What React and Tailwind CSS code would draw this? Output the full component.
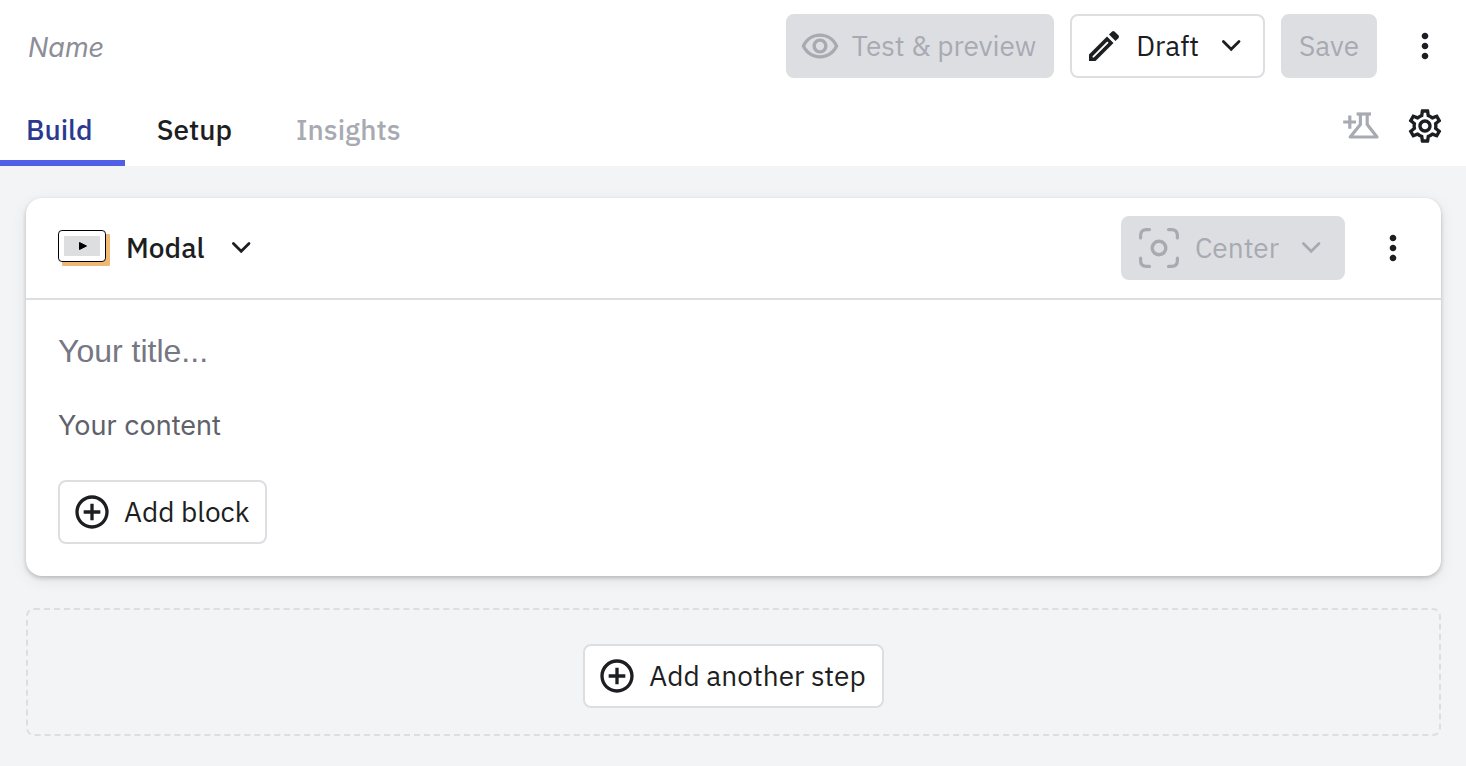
import React from "react";
import {
  MdOutlineRemoveRedEye,
  MdAddCircleOutline,
  MdMoreVert,
  MdOutlineSettings,
} from "react-icons/md";

const FONT = "font-['IBM_Plex_Sans',Roboto,sans-serif]";

function ChevronIcon() {
  return (
    <svg width="20" height="14" viewBox="0 0 20 14" fill="none" stroke="currentColor" strokeWidth="2.8" strokeLinecap="round" strokeLinejoin="miter" aria-hidden="true">
      <path d="M2.4 2.6L10.2 10.2L18 2.6" />
    </svg>
  );
}

function PencilIcon() {
  return (
    <svg width="40" height="40" viewBox="0 0 40 40" fill="currentColor" aria-hidden="true">
      <path fillRule="evenodd" d="M5 28.5L23 10.5L29.5 17L11.5 35H5ZM8.6 30.2V31.4H9.8L24.6 16.8L23.2 15.4Z" />
      <path d="M25 8.5L28.1 5.4Q29.3 4.6 30.5 5.4L34.6 9.5Q35.4 10.7 34.6 11.9L31.5 15Z" />
    </svg>
  );
}

function FlaskPlusIcon() {
  return (
    <svg width="36" height="28" viewBox="0 0 36 28" fill="none" stroke="currentColor" strokeWidth="3.2" aria-hidden="true">
      <path d="M0.2 10H13M6.8 3.6V16.8" />
      <path d="M13.6 2H28" />
      <path d="M17.4 2V12.6L7.2 25H34L24.2 12.6V2" strokeLinejoin="round" />
    </svg>
  );
}

function CenterIcon() {
  return (
    <svg width="40" height="40" viewBox="0 0 40 40" fill="none" stroke="currentColor" strokeWidth="3.2" strokeLinecap="round" aria-hidden="true">
      <path d="M1.6 10V7.5Q1.6 1.6 7.5 1.6H10.5M29.5 1.6H32.5Q38.4 1.6 38.4 7.5V10M38.4 30V32.5Q38.4 38.4 32.5 38.4H29.5M10.5 38.4H7.5Q1.6 38.4 1.6 32.5V30" />
      <circle cx="20" cy="20" r="6.8" strokeWidth="3.4" />
    </svg>
  );
}

function ModalIcon() {
  return (
    <svg width="52" height="36" viewBox="0 0 52 36" aria-hidden="true">
      <rect x="4" y="4" width="48" height="32" rx="1" fill="#f0b775" />
      <rect x="0.5" y="0.5" width="47" height="31" rx="3.4" fill="#fff" stroke="#000" strokeWidth="1" />
      <rect x="6" y="6" width="36" height="20" rx="1" fill="#dddee0" />
      <path d="M21.5 12.5L28.5 16L21.5 19.5Z" fill="#000" stroke="#000" strokeLinejoin="round" />
    </svg>
  );
}

function Button({ children, className, disabled }) {
  return (
    <button
      type="button"
      disabled={disabled}
      className={`flex h-16 shrink-0 items-center whitespace-nowrap rounded-lg border-2 border-[#dddee2] ${
        disabled ? "bg-[#dddee2] text-[#a8aab2]" : "bg-white text-[#1d1e22]"
      } ${className}`}
    >
      {children}
    </button>
  );
}

function MoreButton({ label }) {
  return (
    <button type="button" aria-label={label} className="flex h-16 w-16 items-center justify-center text-[#1d1e22]">
      <MdMoreVert size={40} />
    </button>
  );
}

export default function App() {
  return (
    <div className={`min-h-screen bg-[#f3f4f6] text-[28px] leading-9 text-[#1d1e22] ${FONT}`}>
      <header className="bg-white">
        <div className="flex items-center gap-4 pl-7 pr-[9px] pt-[14px]">
          <input
            aria-label="Name"
            placeholder="Name"
            className="h-10 min-w-0 flex-1 bg-transparent pt-[2px] font-['Inter',sans-serif] text-[27px] italic outline-none placeholder:text-[#8c8e98]"
          />
          <Button disabled className="gap-3 pl-3 pr-4">
            <MdOutlineRemoveRedEye size={40} />
            Test &amp; preview
          </Button>
          <Button className="gap-3 pl-3 pr-[22px]">
            <PencilIcon />
            <span className="pr-[10px]">Draft</span>
            <ChevronIcon />
          </Button>
          <Button disabled className="px-4">Save</Button>
          <MoreButton label="More options" />
        </div>
        <div className="flex h-[88px] items-stretch justify-between pr-[21px]">
          <nav className="flex font-medium">
            <a href="#build" aria-current="page" className="flex items-center border-b-[6px] border-[#4f60e6] pl-[26px] pr-8 pt-[22px] text-[#2b3990]">Build</a>
            <a href="#setup" className="flex items-center border-b-[6px] border-transparent px-8 pt-[22px] text-[#1d1e22]">Setup</a>
            <a href="#insights" className="flex items-center border-b-[6px] border-transparent px-8 pt-[22px] text-[#a8aab2]">Insights</a>
          </nav>
          <div className="flex items-center gap-[26px] pt-2">
            <button type="button" aria-label="Add experiment" className="text-[#a8aab2]"><FlaskPlusIcon /></button>
            <button type="button" aria-label="Settings"><MdOutlineSettings size={40} /></button>
          </div>
        </div>
      </header>

      <main className="flex flex-col gap-8 pb-[30px] pl-[26px] pr-[25px] pt-8">
        <section className="rounded-2xl bg-white shadow-[0_2px_4px_rgba(0,0,0,0.2),0_4px_16px_rgba(0,0,0,0.08)]">
          <div className="flex items-center justify-between border-b-2 border-[#dddee2] py-[18px] pl-8 pr-4">
            <button type="button" className="flex items-center gap-4 font-medium">
              <ModalIcon />
              <span className="pr-[11px]">Modal</span>
              <ChevronIcon />
            </button>
            <div className="flex items-center gap-4">
              <Button disabled className="gap-4 pl-4 pr-[22px]">
                <CenterIcon />
                <span className="pr-[6px]">Center</span>
                <ChevronIcon />
              </Button>
              <MoreButton label="Step options" />
            </div>
          </div>
          <div className="flex flex-col items-start px-8 pb-8 pt-[31px]">
            <input
              aria-label="Title"
              placeholder="Your title..."
              className="h-10 w-full bg-transparent font-['Liberation_Sans',sans-serif] text-[32px] outline-none placeholder:text-[#757783]"
            />
            <input
              aria-label="Content"
              placeholder="Your content"
              className="mb-9 mt-[37px] h-9 w-full bg-transparent font-['Inter',sans-serif] text-[27px] outline-none placeholder:text-[#5f616b]"
            />
            <Button className="gap-3 px-3">
              <MdAddCircleOutline size={40} />
              <span className="pr-1">Add block</span>
            </Button>
          </div>
        </section>

        <section className="flex h-32 items-center justify-center rounded-lg border-2 border-dashed border-[#dddee2] pt-2">
          <Button className="gap-3 px-3">
            <MdAddCircleOutline size={40} />
            <span className="pr-1">Add another step</span>
          </Button>
        </section>
      </main>
    </div>
  );
}
